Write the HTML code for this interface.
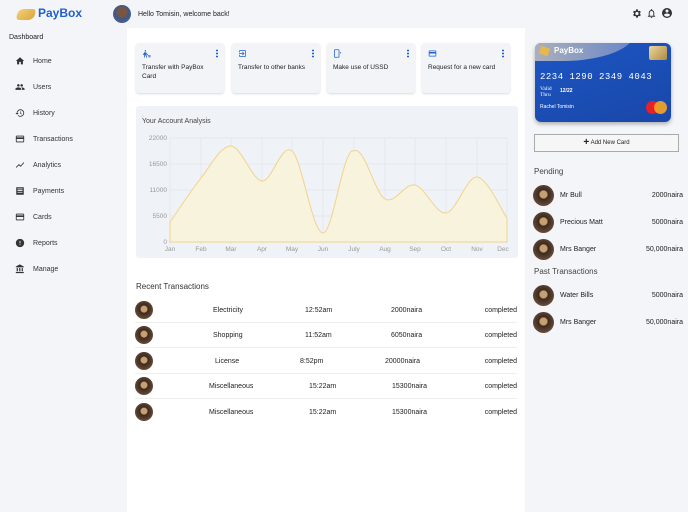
<!DOCTYPE html>
<html><head><meta charset="utf-8"><style>
*{box-sizing:border-box;margin:0;padding:0}
body{width:688px;height:512px;overflow:hidden;background:#f3f5f8;font-family:"Liberation Sans",sans-serif;color:#222;position:relative;font-size:7px}
.abs{position:absolute}
.main{position:absolute;left:127px;top:28px;width:398px;height:484px;background:#fff}
.nav{position:absolute;left:15px;font-size:7px;color:#333;display:flex;align-items:center}
.nav svg{width:10px;height:10px;margin-right:8px;fill:#333}
.card{position:absolute;top:43px;width:88px;height:50px;background:#f2f4f7;border-radius:3px;box-shadow:0 1px 2px rgba(0,0,0,.15);padding:6px 6px;font-size:6.5px;line-height:9px}
.card svg{width:9px;height:9px;fill:#1f5fd1;display:block;margin-bottom:5px}
.dots{position:absolute;right:6px;top:6px;width:2px;height:9px;background:radial-gradient(circle,#1f5fd1 0.9px,transparent 1px) 0 0/2px 3px}
.av{width:18px;height:18px;border-radius:50%;background:radial-gradient(circle at 50% 45%,#c8a070 0 22%,#3a2a20 30%,#5a4030 60%,#8a6a50);position:absolute}
.row{position:absolute;left:135px;width:382px;height:25px;border-bottom:1px solid #eee;font-size:7px}
.row span{position:absolute;top:9px}
.p{position:absolute;left:533px;width:150px;height:22px;font-size:7px}
.p .av{left:0;top:1px;width:21px;height:21px}
.p .n{position:absolute;left:27px;top:8px}
.p .a{position:absolute;right:0;top:8px}
</style></head><body>
<!-- top -->
<div class="abs" style="left:17px;top:9px;width:18px;height:11px;background:linear-gradient(135deg,#f3d07a,#d9a63c);border-radius:6px 3px 6px 3px;transform:skewX(-10deg)"></div>
<div class="abs" style="left:38px;top:6px;font-size:12px;font-weight:bold;color:#1f5fd1">PayBox</div>
<div class="abs" style="left:113px;top:5px;width:18px;height:18px;border-radius:50%;background:radial-gradient(circle at 50% 40%,#7a5540 0 30%,#3b5a90 50%,#667)"></div>
<div class="abs" style="left:138px;top:11px;font-size:7px">Hello Tomisin, welcome back!</div>
<svg class="abs" style="left:631px;top:8px" width="11" height="11" viewBox="0 0 24 24"><path fill="#333" d="M19.4 13a7.5 7.5 0 0 0 0-2l2.1-1.6-2-3.5-2.5 1a7 7 0 0 0-1.7-1L15 3h-4l-.4 2.9a7 7 0 0 0-1.7 1l-2.5-1-2 3.5L6.6 11a7.5 7.5 0 0 0 0 2l-2.1 1.6 2 3.5 2.5-1a7 7 0 0 0 1.7 1L11 21h4l.4-2.9a7 7 0 0 0 1.7-1l2.5 1 2-3.5zM13 15.5a3.5 3.5 0 1 1 0-7 3.5 3.5 0 0 1 0 7z"/></svg>
<svg class="abs" style="left:646px;top:8px" width="11" height="11" viewBox="0 0 24 24"><path fill="#333" d="M12 22a2 2 0 0 0 2-2h-4a2 2 0 0 0 2 2zm6-6v-5c0-3-1.6-5.6-4.5-6.3V4a1.5 1.5 0 0 0-3 0v.7C7.6 5.4 6 8 6 11v5l-2 2v1h16v-1zm-2 1H8v-6c0-2.5 1.5-4.5 4-4.5s4 2 4 4.5z"/></svg>
<svg class="abs" style="left:661px;top:7px" width="12" height="12" viewBox="0 0 24 24"><path fill="#333" d="M12 2a10 10 0 1 0 0 20 10 10 0 0 0 0-20zm0 3a3 3 0 1 1 0 6 3 3 0 0 1 0-6zm0 14.2a7.2 7.2 0 0 1-6-3.2c0-2 4-3.1 6-3.1s6 1.1 6 3.1a7.2 7.2 0 0 1-6 3.2z"/></svg>
<!-- sidebar -->
<div class="abs" style="left:9px;top:34px;font-size:7px">Dashboard</div>
<div class="nav" style="top:56px"><svg viewBox="0 0 24 24"><path d="M10 20v-6h4v6h5v-8h3L12 3 2 12h3v8z"/></svg>Home</div>
<div class="nav" style="top:82px"><svg viewBox="0 0 24 24"><path d="M16 11a3 3 0 1 0 0-6 3 3 0 0 0 0 6zm-8 0a3 3 0 1 0 0-6 3 3 0 0 0 0 6zm0 2c-2.3 0-7 1.2-7 3.5V19h14v-2.5C15 14.2 10.3 13 8 13zm8 0c-.3 0-.6 0-1 .1 1.2.8 2 2 2 3.4V19h6v-2.5c0-2.3-4.7-3.5-7-3.5z"/></svg>Users</div>
<div class="nav" style="top:108px"><svg viewBox="0 0 24 24"><path d="M13 3a9 9 0 0 0-9 9H1l4 4 4-4H6a7 7 0 1 1 2 5l-1.4 1.4A9 9 0 1 0 13 3zm-1 5v5l4 2.5.8-1.2-3.3-2V8z"/></svg>History</div>
<div class="nav" style="top:134px"><svg viewBox="0 0 24 24"><path d="M20 4H4a2 2 0 0 0-2 2v12a2 2 0 0 0 2 2h16a2 2 0 0 0 2-2V6a2 2 0 0 0-2-2zm0 14H4v-6h16zm0-10H4V6h16z"/></svg>Transactions</div>
<div class="nav" style="top:160px"><svg viewBox="0 0 24 24"><path d="M3.5 18.5l6-6 4 4L22 6.9l-1.4-1.4-7.1 8-4-4L2 16.99z"/></svg>Analytics</div>
<div class="nav" style="top:186px"><svg viewBox="0 0 24 24"><path d="M3 3h18v18H3zm3 3v2h12V6zm0 4v2h12v-2zm0 4v2h12v-2z"/></svg>Payments</div>
<div class="nav" style="top:212px"><svg viewBox="0 0 24 24"><path d="M20 4H4a2 2 0 0 0-2 2v12a2 2 0 0 0 2 2h16a2 2 0 0 0 2-2V6a2 2 0 0 0-2-2zm0 14H4v-6h16zm0-10H4V6h16z"/></svg>Cards</div>
<div class="nav" style="top:238px"><svg viewBox="0 0 24 24"><path d="M12 2a10 10 0 1 0 0 20 10 10 0 0 0 0-20zm1 15h-2v-2h2zm0-4h-2V7h2z"/></svg>Reports</div>
<div class="nav" style="top:264px"><svg viewBox="0 0 24 24"><path d="M4 10v7h3v-7zm6 0v7h3v-7zM2 22h19v-3H2zm14-12v7h3v-7zM11.5 1L2 6v2h19V6z"/></svg>Manage</div>
<div class="main"></div>
<!-- quick cards -->
<div class="card" style="left:136px"><svg viewBox="0 0 24 24"><path d="M9 3a2 2 0 1 1 0 4 2 2 0 0 1 0-4zm-3 6h5l2 4h3v2h-4l-1-2v3l2 2v5h-2v-4l-3-3-1 7H5l1-9-2 2H2z M15 17h8v2h-8zm2 3h6v2h-6z"/></svg>Transfer with PayBox Card<div class="dots"></div></div>
<div class="card" style="left:232px"><svg viewBox="0 0 24 24"><path d="M19 3H5a2 2 0 0 0-2 2v4h2V5h14v14H5v-4H3v4a2 2 0 0 0 2 2h14a2 2 0 0 0 2-2V5a2 2 0 0 0-2-2zm-8.1 12.6L12.3 17l5-5-5-5-1.4 1.4 2.6 2.6H3v2h10.5z"/></svg>Transfer to other banks<div class="dots"></div></div>
<div class="card" style="left:327px"><svg viewBox="0 0 24 24"><path d="M15 1H5a2 2 0 0 0-2 2v18a2 2 0 0 0 2 2h10a2 2 0 0 0 2-2V3a2 2 0 0 0-2-2zm0 20H5V3h10zm4-13h2v4h-2z"/></svg>Make use of USSD<div class="dots"></div></div>
<div class="card" style="left:422px"><svg viewBox="0 0 24 24"><path d="M20 4H4a2 2 0 0 0-2 2v12a2 2 0 0 0 2 2h16a2 2 0 0 0 2-2V6a2 2 0 0 0-2-2zm0 14H4v-6h16zm0-10H4V6h16z"/></svg>Request for a new card<div class="dots"></div></div>
<!-- chart -->
<div class="abs" style="left:136px;top:106px;width:382px;height:152px;background:#eff2f6;border-radius:3px"></div>
<div class="abs" style="left:142px;top:118px;font-size:7px;color:#444">Your Account Analysis</div>
<svg class="abs" style="left:0;top:0" width="688" height="512">
<g stroke="#dde1e6" stroke-width="0.6">
<line x1="170" y1="138" x2="507" y2="138"/><line x1="170" y1="164" x2="507" y2="164"/><line x1="170" y1="190" x2="507" y2="190"/><line x1="170" y1="216" x2="507" y2="216"/><line x1="170" y1="242" x2="507" y2="242"/>
<line x1="170" y1="138" x2="170" y2="244"/><line x1="201" y1="138" x2="201" y2="244"/><line x1="231" y1="138" x2="231" y2="244"/><line x1="262" y1="138" x2="262" y2="244"/><line x1="292" y1="138" x2="292" y2="244"/><line x1="323" y1="138" x2="323" y2="244"/><line x1="354" y1="138" x2="354" y2="244"/><line x1="385" y1="138" x2="385" y2="244"/><line x1="415" y1="138" x2="415" y2="244"/><line x1="446" y1="138" x2="446" y2="244"/><line x1="477" y1="138" x2="477" y2="244"/><line x1="507" y1="138" x2="507" y2="244"/>
</g>
<path d="M170 222C175 215 191 190.7 201 178C211 165.3 220.8 145.5 231 146C241.2 146.5 252.2 180.2 262 181C271.8 181.8 281.8 142.3 292 151C302.2 159.7 312.3 233 323 233C333.3 233 343.3 145.3 354 151C364.3 145.3 374.8 193.3 385 199C395.2 204.7 404.8 182.7 415 185C425.2 187.3 435.7 214.3 446 213C456.3 211.7 466.8 176.2 477 177C487.2 177.8 502 211.2 507 218L507 242L170 242Z" fill="#f8f3dc" stroke="#f0d48a" stroke-width="1"/>
<g font-size="6.5" fill="#999" font-family="Liberation Sans">
<text x="167" y="140" text-anchor="end">22000</text><text x="167" y="166" text-anchor="end">16500</text><text x="167" y="192" text-anchor="end">11000</text><text x="167" y="218" text-anchor="end">5500</text><text x="167" y="244" text-anchor="end">0</text>
<g text-anchor="middle"><text x="170" y="251">Jan</text><text x="201" y="251">Feb</text><text x="231" y="251">Mar</text><text x="262" y="251">Apr</text><text x="292" y="251">May</text><text x="323" y="251">Jun</text><text x="354" y="251">July</text><text x="385" y="251">Aug</text><text x="415" y="251">Sep</text><text x="446" y="251">Oct</text><text x="477" y="251">Nov</text><text x="503" y="251">Dec</text></g>
</g>
</svg>
<!-- recent -->
<div class="abs" style="left:136px;top:282px;font-size:8px;color:#333">Recent Transactions</div>
<div class="row" style="top:298px"><div class="av" style="left:0;top:3px"></div><span style="left:78px">Electricity</span><span style="left:170px">12:52am</span><span style="left:256px">2000naira</span><span style="right:0">completed</span></div>
<div class="row" style="top:323px"><div class="av" style="left:0;top:3px"></div><span style="left:78px">Shopping</span><span style="left:170px">11:52am</span><span style="left:256px">6050naira</span><span style="right:0">completed</span></div>
<div class="row" style="top:349px"><div class="av" style="left:0;top:3px"></div><span style="left:80px">License</span><span style="left:165px">8:52pm</span><span style="left:250px">20000naira</span><span style="right:0">completed</span></div>
<div class="row" style="top:374px"><div class="av" style="left:0;top:3px"></div><span style="left:74px">Miscellaneous</span><span style="left:174px">15:22am</span><span style="left:257px">15300naira</span><span style="right:0">completed</span></div>
<div class="row" style="top:400px;border:none"><div class="av" style="left:0;top:3px"></div><span style="left:74px">Miscellaneous</span><span style="left:174px">15:22am</span><span style="left:257px">15300naira</span><span style="right:0">completed</span></div>
<!-- credit card -->
<div class="abs" style="left:535px;top:43px;width:136px;height:79px;border-radius:6px;background:linear-gradient(160deg,#1d56c4,#1947a8);box-shadow:0 2px 4px rgba(0,0,0,.3);overflow:hidden">
<div class="abs" style="left:-20px;top:-30px;width:120px;height:48px;border-radius:0 0 60% 0;background:linear-gradient(90deg,#b8b8b8,#6a86c8)"></div>
<div class="abs" style="left:5px;top:4px;width:9px;height:8px;background:#e8b84a;transform:rotate(20deg)"></div>
<div class="abs" style="left:19px;top:3px;font-size:8px;font-weight:bold;color:#fff">PayBox</div>
<div class="abs" style="left:114px;top:3px;width:18px;height:14px;border-radius:2px;background:linear-gradient(135deg,#e8d8a0,#b08a40)"></div>
<div class="abs" style="left:5px;top:29px;font-family:'Liberation Mono',monospace;font-size:9px;color:#fff;letter-spacing:.5px">2234 1290 2349 4043</div>
<div class="abs" style="left:5px;top:43px;font-family:'Liberation Serif',serif;font-size:5.5px;color:#fff;line-height:6px">Valid<br>Thru</div>
<div class="abs" style="left:25px;top:45px;font-size:5px;color:#fff;font-weight:bold">12/22</div>
<div class="abs" style="left:5px;top:61px;font-size:5px;color:#fff">Rachel Tomisin</div>
<div class="abs" style="left:111px;top:58px;width:13px;height:13px;border-radius:50%;background:#e8202a"></div>
<div class="abs" style="left:119px;top:58px;width:13px;height:13px;border-radius:50%;background:#f5a524;opacity:.9"></div>
</div>
<div class="abs" style="left:534px;top:134px;width:145px;height:18px;border:1px solid #aaa;background:#f6f6f6;font-size:6px;text-align:center;line-height:16px"><b style="font-size:10px;vertical-align:-1px">+</b> Add New Card</div>
<div class="abs" style="left:534px;top:167px;font-size:8px;color:#444">Pending</div>
<div class="p" style="top:184px"><div class="av"></div><span class="n">Mr Bull</span><span class="a">2000naira</span></div>
<div class="p" style="top:211px"><div class="av"></div><span class="n">Precious Matt</span><span class="a">5000naira</span></div>
<div class="p" style="top:238px"><div class="av"></div><span class="n">Mrs Banger</span><span class="a">50,000naira</span></div>
<div class="abs" style="left:534px;top:267px;font-size:8px;color:#444">Past Transactions</div>
<div class="p" style="top:284px"><div class="av"></div><span class="n">Water Bills</span><span class="a">5000naira</span></div>
<div class="p" style="top:311px"><div class="av"></div><span class="n">Mrs Banger</span><span class="a">50,000naira</span></div>
</body></html>
